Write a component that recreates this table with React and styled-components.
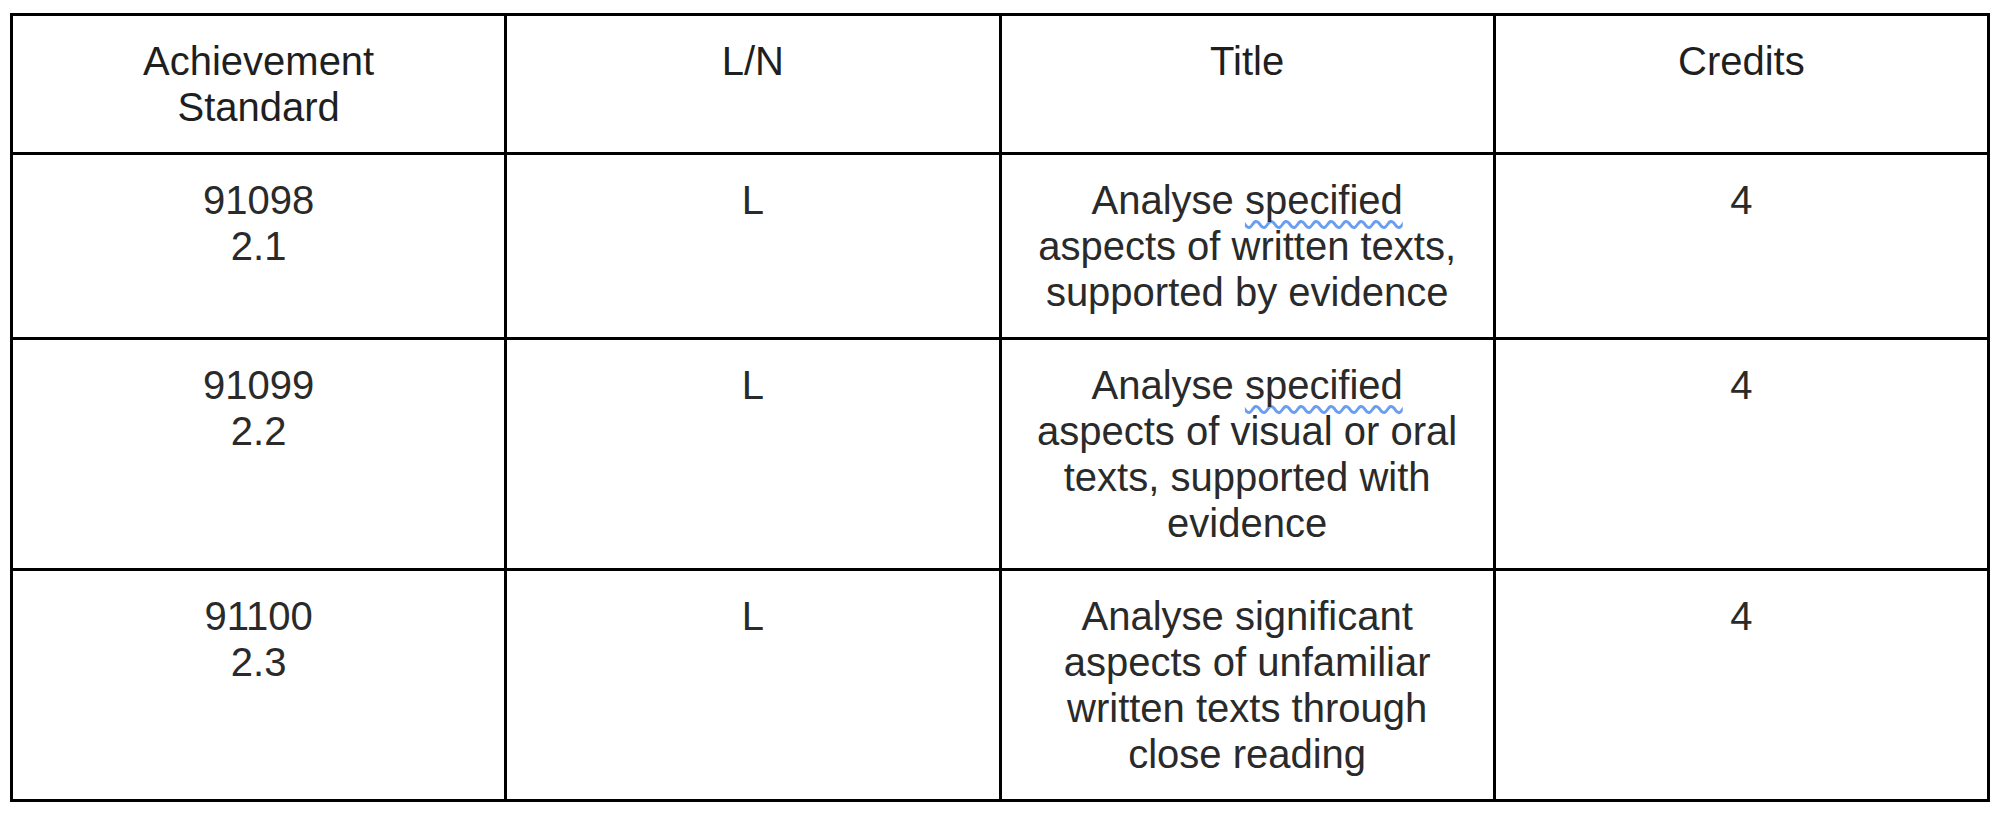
import React from 'react'
import styled, { createGlobalStyle } from 'styled-components'

const GlobalStyle = createGlobalStyle`
    html, body {
        margin: 0;
        padding: 0;
        background: #ffffff;
    }
    body {
        font-family: 'Liberation Sans', Arial, sans-serif;
    }
`

const Page = styled.div`
    padding: 13px 0 0 10px;
`

const Table = styled.table`
    width: 1980px;
    table-layout: fixed;
    border-collapse: separate;
    border-spacing: 0;
    border-left: 3px solid #000;
    border-top: 3px solid #000;
    font-family: 'Liberation Sans', Arial, sans-serif;
    font-size: 40px;
    line-height: 46px;
    color: #2a2a2a;
`

const Cell = styled.td`
    border-right: 3px solid #000;
    border-bottom: 3px solid #000;
    padding: 22px 26px;
    text-align: center;
    vertical-align: top;
    font-weight: 400;
`

const HeadCell = styled(Cell).attrs({ as: 'th' })`
    color: #1f1f1f;
`

// spellcheck squiggle under the word docs flags
const Flagged = styled.span`
    text-decoration: underline wavy #6a9ef0;
    text-decoration-thickness: 3px;
    text-underline-offset: 6px;
    text-decoration-skip-ink: none;
`

const Line = styled.span`
    display: block;
`

const rows = [
    {
        code: '91098',
        level: '2.1',
        ln: 'L',
        title: (
            <>
                Analyse <Flagged>specified</Flagged> aspects of written texts, supported by evidence
            </>
        ),
        credits: 4,
    },
    {
        code: '91099',
        level: '2.2',
        ln: 'L',
        title: (
            <>
                Analyse <Flagged>specified</Flagged> aspects of visual or oral texts, supported with
                evidence
            </>
        ),
        credits: 4,
    },
    {
        code: '91100',
        level: '2.3',
        ln: 'L',
        title: <>Analyse significant aspects of unfamiliar written texts through close reading</>,
        credits: 4,
    },
]

const App = () => {
    return (
        <Page>
            <GlobalStyle />
            <Table>
                <thead>
                    <tr>
                        <HeadCell>
                            <Line>Achievement</Line>
                            <Line>Standard</Line>
                        </HeadCell>
                        <HeadCell>L/N</HeadCell>
                        <HeadCell>Title</HeadCell>
                        <HeadCell>Credits</HeadCell>
                    </tr>
                </thead>
                <tbody>
                    {rows.map(row => (
                        <tr key={row.code}>
                            <Cell>
                                <Line>{row.code}</Line>
                                <Line>{row.level}</Line>
                            </Cell>
                            <Cell>{row.ln}</Cell>
                            <Cell>{row.title}</Cell>
                            <Cell>{row.credits}</Cell>
                        </tr>
                    ))}
                </tbody>
            </Table>
        </Page>
    )
}

export default App
